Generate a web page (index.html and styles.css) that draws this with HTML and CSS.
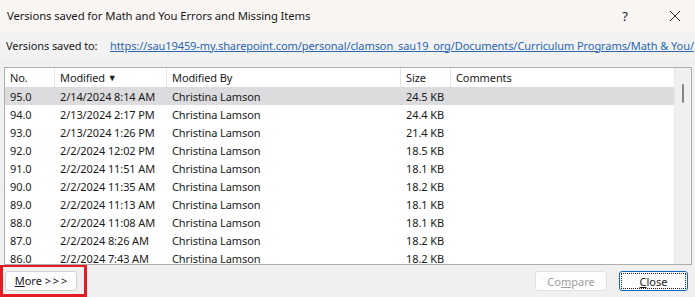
FILE: index.html
```html
<!DOCTYPE html>
<html>
  <head>
    <meta charset="utf-8" />
    <title>Versions saved</title>
    <link rel="stylesheet" href="styles.css">
  </head>
  <body>
    <div class="dialog">
      <div class="titlebar">
        <span class="title">Versions saved for Math and You Errors and Missing Items</span>
        <span class="help">?</span>
        <span class="close-x">
          <svg width="12" height="12" viewBox="0 0 12 12"><path d="M1 1 L11 11 M11 1 L1 11" stroke="#333" stroke-width="1" fill="none"/></svg>
        </span>
      </div>
      <div class="savedto">
        <span class="label">Versions saved to:</span>
        <a class="link" href="#">https://sau19459-my.sharepoint.com/personal/clamson_sau19_org/Documents/Curriculum Programs/Math &amp; You/</a>
      </div>
      <div class="listbox">
        <div class="list">
          <div class="row head">
            <div class="c no">No.</div>
            <div class="c mod">Modified <span class="sort">&#9660;</span></div>
            <div class="c by">Modified By</div>
            <div class="c size">Size</div>
            <div class="c comm">Comments</div>
          </div>
          <div class="row sel"><div class="c no">95.0</div><div class="c mod">2/14/2024 8:14 AM</div><div class="c by">Christina Lamson</div><div class="c size">24.5 KB</div><div class="c comm"></div></div>
          <div class="row"><div class="c no">94.0</div><div class="c mod">2/13/2024 2:17 PM</div><div class="c by">Christina Lamson</div><div class="c size">24.4 KB</div><div class="c comm"></div></div>
          <div class="row"><div class="c no">93.0</div><div class="c mod">2/13/2024 1:26 PM</div><div class="c by">Christina Lamson</div><div class="c size">21.4 KB</div><div class="c comm"></div></div>
          <div class="row"><div class="c no">92.0</div><div class="c mod">2/2/2024 12:02 PM</div><div class="c by">Christina Lamson</div><div class="c size">18.5 KB</div><div class="c comm"></div></div>
          <div class="row"><div class="c no">91.0</div><div class="c mod">2/2/2024 11:51 AM</div><div class="c by">Christina Lamson</div><div class="c size">18.1 KB</div><div class="c comm"></div></div>
          <div class="row"><div class="c no">90.0</div><div class="c mod">2/2/2024 11:35 AM</div><div class="c by">Christina Lamson</div><div class="c size">18.2 KB</div><div class="c comm"></div></div>
          <div class="row"><div class="c no">89.0</div><div class="c mod">2/2/2024 11:13 AM</div><div class="c by">Christina Lamson</div><div class="c size">18.1 KB</div><div class="c comm"></div></div>
          <div class="row"><div class="c no">88.0</div><div class="c mod">2/2/2024 11:08 AM</div><div class="c by">Christina Lamson</div><div class="c size">18.1 KB</div><div class="c comm"></div></div>
          <div class="row"><div class="c no">87.0</div><div class="c mod">2/2/2024 8:26 AM</div><div class="c by">Christina Lamson</div><div class="c size">18.2 KB</div><div class="c comm"></div></div>
          <div class="row"><div class="c no">86.0</div><div class="c mod">2/2/2024 7:43 AM</div><div class="c by">Christina Lamson</div><div class="c size">18.2 KB</div><div class="c comm"></div></div>
        </div>
        <div class="scrollbar"><div class="thumb"></div></div>
      </div>
      <div class="footer">
        <div class="highlight">
          <button class="btn"><u>M</u>ore &gt;&thinsp;&gt;&thinsp;&gt;</button>
        </div>
        <div class="spacer"></div>
        <button class="btn disabled">Co<u>m</u>pare</button>
        <button class="btn focused"><span class="focusring"><u>C</u>lose</span></button>
      </div>
    </div>
  </body>
</html>
```
FILE: styles.css
```css
* {
  box-sizing: border-box;
}

body {
  margin: 0;
  font-family: "Noto Sans", "Open Sans", sans-serif;
  font-size: 11px;
  letter-spacing: -0.1px;
  color: #1a1a1a;
  background: #f0f0f0;
}

.dialog {
  width: 695px;
  height: 297px;
  display: flex;
  flex-direction: column;
  overflow: hidden;
}

.titlebar {
  height: 31px;
  display: flex;
  align-items: center;
  padding-left: 7px;
  background: #f9f5f2;
  font-size: 11.3px;
}

.title {
  flex: 1;
}

.help {
  width: 20px;
  margin-right: 30px;
  font-size: 13px;
  text-align: center;
}

.close-x {
  width: 20px;
  margin-right: 10px;
  display: flex;
  justify-content: center;
}

.savedto {
  height: 28px;
  display: flex;
  align-items: center;
  padding-left: 6px;
  background: #f2f2f2;
  white-space: nowrap;
}

.label {
  width: 104px;
  flex-shrink: 0;
}

.link {
  color: #2a66b0;
  text-decoration: underline;
  letter-spacing: -0.08px;
}

.listbox {
  margin: 8px 3px 0 4px;
  height: 198px;
  border: 1px solid #adadad;
  background: #ffffff;
  display: flex;
}

.list {
  flex: 1;
}

.row {
  display: flex;
  height: 18px;
  align-items: center;
}

.row.head {
  height: 19px;
}

.row.sel {
  background: #dcdcdf;
}

.c {
  padding-left: 5px;
  white-space: nowrap;
  overflow: hidden;
}

.no { width: 50px; }
.mod { width: 112px; }
.by { width: 234px; }
.size { width: 50px; }
.comm { flex: 1; }

.head .c {
  height: 19px;
  line-height: 19px;
  border-right: 1px solid #e5e5e5;
}

.head .comm {
  border-right: none;
}

.sort {
  font-size: 9px;
  vertical-align: 1px;
}

.scrollbar {
  width: 17px;
  background: #f0f0f0;
  border-left: 1px solid #e8e8e8;
  padding-top: 16px;
  display: flex;
  justify-content: center;
}

.thumb {
  width: 2px;
  height: 19px;
  background: #858585;
  border-radius: 1px;
}

.footer {
  flex: 1;
  display: flex;
  align-items: center;
  padding-right: 7px;
}

.highlight {
  height: 32px;
  width: 87px;
  border: 3px solid #e31b23;
  border-top-width: 2px;
  display: flex;
  align-items: center;
  padding-left: 2px;
}

.spacer {
  flex: 1;
}

.btn {
  font-family: inherit;
  font-size: 11px;
  color: #1a1a1a;
  height: 20px;
  width: 72px;
  padding: 0;
  background: #fdfdfd;
  border: 1px solid #d0d0d0;
  border-radius: 3px;
}

.btn.disabled {
  color: #a0a0a0;
  border-color: #e0e0e0;
  margin-right: 12px;
}

.btn.focused {
  width: 69px;
  border: 1px solid #0f68c0;
  padding: 1px;
}

.focusring {
  display: block;
  height: 100%;
  border: 1px dotted #202020;
  line-height: 15px;
}
```
